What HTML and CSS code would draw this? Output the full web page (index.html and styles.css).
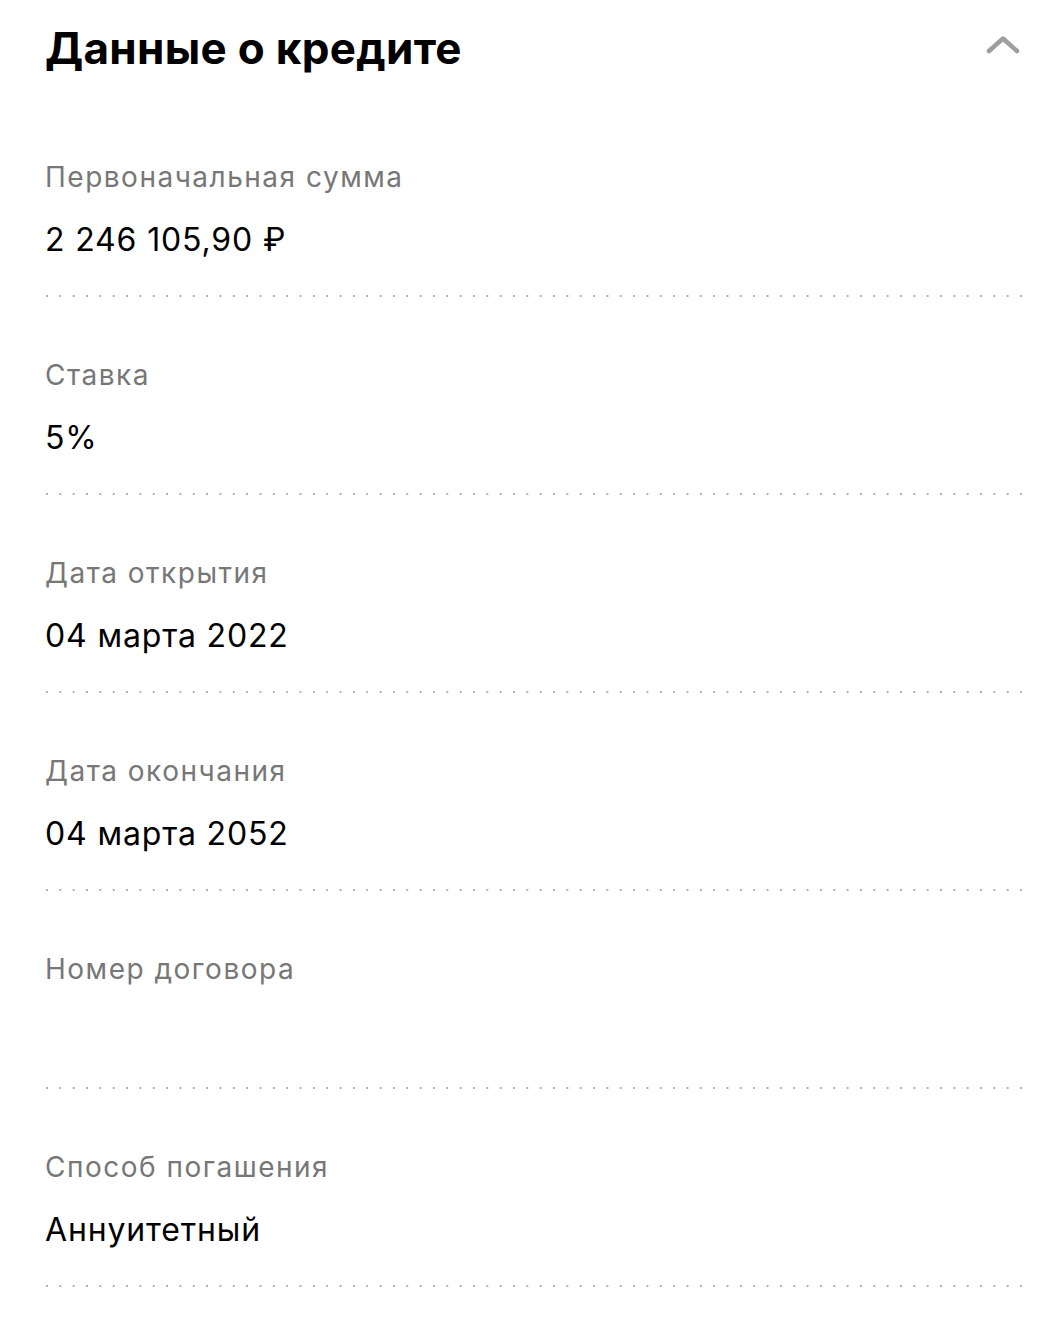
FILE: index.html
```html
<!DOCTYPE html>
<html lang="ru">
<head>
<meta charset="utf-8">
<link rel="stylesheet" href="styles.css">
</head>
<body>
<section class="card">
  <header class="head">
    <h1 class="title">Данные о кредите</h1>
    <svg class="chevron" width="34" height="22" viewBox="0 0 34 22"><path d="M3 16 L17 3.5 L31 16" fill="none" stroke="#9e9e9e" stroke-width="4.5" stroke-linecap="round" stroke-linejoin="round"/></svg>
  </header>
  <div class="rows">
    <div class="row"><div class="label">Первоначальная сумма</div><div class="value">2 246 105,90 ₽</div></div>
    <div class="row"><div class="label">Ставка</div><div class="value">5%</div></div>
    <div class="row"><div class="label">Дата открытия</div><div class="value">04 марта 2022</div></div>
    <div class="row"><div class="label">Дата окончания</div><div class="value">04 марта 2052</div></div>
    <div class="row"><div class="label">Номер договора</div><div class="value"></div></div>
    <div class="row"><div class="label">Способ погашения</div><div class="value">Аннуитетный</div></div>
  </div>
</section>
</body>
</html>
```
FILE: styles.css
```css
html, body { margin: 0; padding: 0; background: #fff; }
body { font-family: Inter, "Noto Sans", sans-serif; color: #000; }
.card { padding: 0 0 0 45px; width: 982px; }
.head { display: flex; justify-content: space-between; align-items: center; height: 96px; padding-right: 7px; }
.title { margin: 0; font-size: 44px; font-weight: 700; letter-spacing: 0.3px; line-height: 96px; }
.chevron { display: block; margin-top: -4px; }
.rows { display: flex; flex-direction: column; padding-top: 56px; }
.row { height: 198px; box-sizing: border-box; position: relative; }
.row::after { content: ""; position: absolute; left: 1px; right: 0; top: 295px; top: 143px; height: 2px;
  background-image: linear-gradient(90deg, #b0b0b0 2px, transparent 2px);
  background-size: 13.35px 2px; background-repeat: repeat-x; }
.label { font-size: 28px; color: #777; line-height: 50px; letter-spacing: 1.5px; }
.value { font-size: 32px; color: #000; line-height: 50px; margin-top: 13px; height: 50px; letter-spacing: 0.85px; }
```
